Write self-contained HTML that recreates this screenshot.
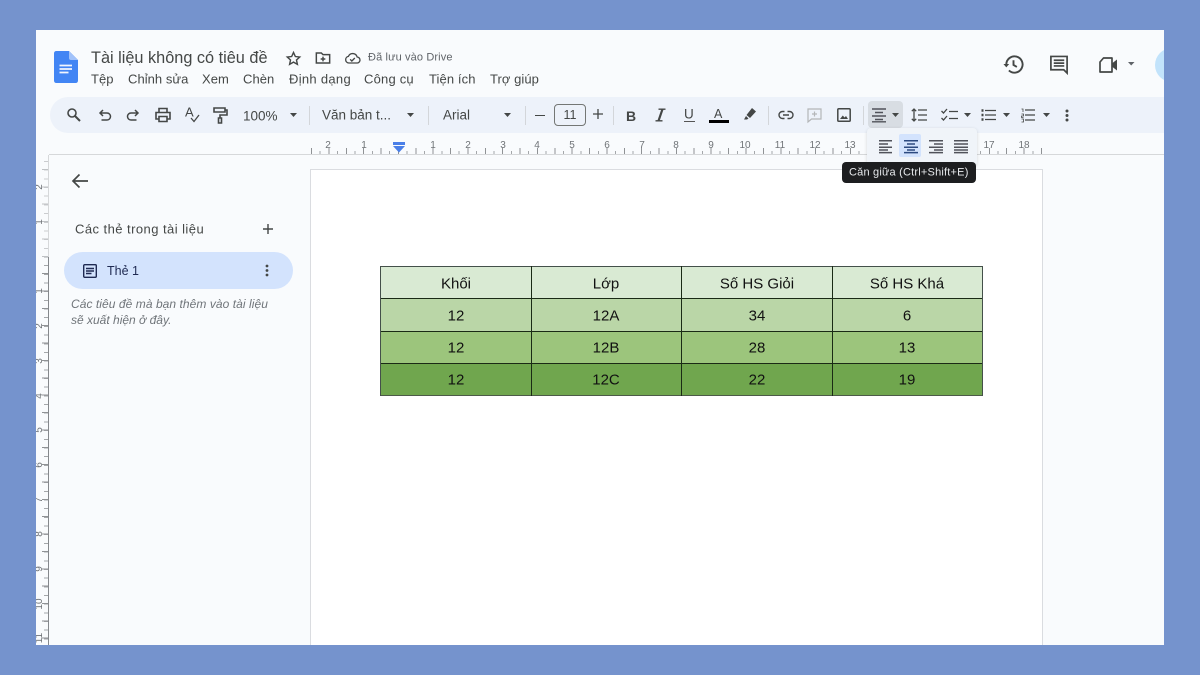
<!DOCTYPE html>
<html><head><meta charset="utf-8">
<style>
html,body{margin:0;padding:0;width:1200px;height:675px;overflow:hidden;background:#7593cd;font-family:"Liberation Sans","Noto Sans CJK SC",sans-serif}
#f{position:absolute;left:36px;top:30px;width:1128px;height:615px;background:#f9fbfd;overflow:hidden}
#w{position:absolute;left:-36px;top:-30px;width:1200px;height:675px;filter:blur(.3px)}
.a,.t{position:absolute}
.t{white-space:nowrap;line-height:1;transform:translateY(-50%)}
.m{font-size:13px;color:#444746;top:79px;letter-spacing:.05px}
.r{font-size:10px;color:#6f7377;transform:translate(-50%,-50%)}
.v{font-size:10px;color:#6f7377;transform:translate(-50%,-50%) rotate(-90deg)}
svg{position:absolute;overflow:visible}
.c{width:150px;text-align:center;color:#111;font-size:15px;transform:translateY(-50%)}
.s{top:106px;width:1px;height:19px;background:#d3d6da}
</style></head><body>
<div id="f"><div id="w">

<!-- doc icon -->
<svg style="left:54px;top:51px" width="24" height="32" viewBox="0 0 24 32"><path d="M2.500 0H15L24 9V29.500Q24 32 21.500 32H2.500Q0 32 0 29.500V2.500Q0 0 2.500 0Z" fill="#4285f4"/><path d="M15 0L24 9H17Q15 9 15 7Z" fill="#a1c2fa"/><path d="M5.500 14.500H18M5.500 18H18M5.500 21.500H14.500" stroke="#f1f5fe" stroke-width="1.800"/></svg>

<div class="t" style="left:91px;top:57.500px;font-size:16.300px;color:#444746">Tài liệu không có tiêu đề</div>
<svg style="left:285px;top:50px" width="17" height="17" viewBox="0 0 24 24" fill="none" stroke="#444746" stroke-width="2"><path d="M12 3.500l2.600 5.700 6.200.700-4.600 4.200 1.300 6.100L12 17.100l-5.500 3.100 1.300-6.100-4.600-4.200 6.200-.7z"/></svg>
<svg style="left:315px;top:50px" width="16" height="16" viewBox="0 0 24 24" fill="none" stroke="#444746" stroke-width="2.200"><path d="M2 19.500V4.500H9.500L12 7H22V19.500ZM12 10V17M8.500 13.500H15.500"/></svg>
<svg style="left:344px;top:50px" width="17" height="16" viewBox="0 0 24 24" fill="none" stroke="#444746" stroke-width="2"><path d="M6.500 19.500a5 5 0 0 1-.7-9.900A7 7 0 0 1 19 10.500a4.500 4.500 0 0 1-.5 9zM8.500 14l2.500 2.500 4.500-4.500"/></svg>
<div class="t" style="left:368px;top:58px;font-size:11px;letter-spacing:.13px;color:#5f6368">Đã lưu vào Drive</div>

<div class="t m" style="left:91px">Tệp</div>
<div class="t m" style="left:128px">Chỉnh sửa</div>
<div class="t m" style="left:202px">Xem</div>
<div class="t m" style="left:243px">Chèn</div>
<div class="t m" style="left:289px;letter-spacing:.3px">Định dạng</div>
<div class="t m" style="left:364px;letter-spacing:.2px">Công cụ</div>
<div class="t m" style="left:429px;letter-spacing:.1px">Tiện ích</div>
<div class="t m" style="left:490px">Trợ giúp</div>

<!-- top right -->
<svg style="left:1002px;top:53px" width="23" height="23" viewBox="0 0 24 24" fill="none" stroke="#444746" stroke-width="2"><path d="M4.500 12a8.500 8.500 0 1 1 2.700 6.200M12 7.500V12.500L15.500 14.500"/><path d="M1.500 11.500H7.500L4.500 15Z" fill="#444746" stroke="none"/></svg>
<svg style="left:1049px;top:55px" width="20" height="20" viewBox="0 0 21 21" fill="none" stroke="#444746" stroke-width="1.800"><path d="M2 1.500H19V19L15.500 15.500H2ZM5 5.500H16M5 8.500H16M5 11.500H16"/></svg>
<svg style="left:1098px;top:56px" width="20" height="18" viewBox="0 0 20 18" fill="none"><path d="M5.500 2H14V16H2V6Z" stroke="#444746" stroke-width="1.700" stroke-linejoin="round"/><path d="M14.500 7L19 3.500V14.500L14.500 11Z" fill="#444746"/></svg>
<svg style="left:1128px;top:62px" width="6" height="4"><path d="M0 0H6.500L3.200 3.500Z" fill="#5f6368"/></svg>
<div class="a" style="left:1155px;top:48px;width:34px;height:34px;border-radius:50%;background:#c2e3fb"></div>

<!-- toolbar -->
<div class="a" style="left:50px;top:97px;width:1130px;height:36px;border-radius:18px 0 0 18px;background:#edf2fa"></div>
<svg style="left:66px;top:107px" width="16" height="16" viewBox="0 0 16 16" fill="none" stroke="#444746" stroke-width="1.600"><circle cx="6" cy="6" r="4"/><path d="M9 9L14 14" stroke-width="2"/></svg>
<svg style="left:98px;top:108px" width="14" height="14" viewBox="0 0 14 14" fill="none" stroke="#444746" stroke-width="1.500"><path d="M3 5H9a3 3 0 0 1 0 7H3.500M5 2L2 5 5 8"/></svg>
<svg style="left:126px;top:108px" width="14" height="14" viewBox="0 0 14 14" fill="none" stroke="#444746" stroke-width="1.500"><path d="M11 5H5a3 3 0 0 0 0 7H10.500M9 2l3 3-3 3"/></svg>
<svg style="left:155px;top:107px" width="16" height="16" viewBox="0 0 16 16" fill="none" stroke="#444746" stroke-width="1.600"><path d="M4 5V1.500H12V5M4 12H1V5.500H15V12H12M4 9.500H12V14.500H4Z"/></svg>
<div class="t" style="left:185px;top:112px;font-size:13px;color:#444746">A</div>
<svg style="left:190px;top:114px" width="10" height="9" fill="none" stroke="#444746" stroke-width="1.300"><path d="M1 4L4 7.500 9 1"/></svg>
<svg style="left:213px;top:107px" width="15" height="17" viewBox="0 0 15 17" fill="none" stroke="#444746" stroke-width="1.600"><path d="M1 1H12V5H1ZM12 3H14V8H7V11M5.500 11H8.500V16H5.500Z"/></svg>
<div class="t" style="left:243px;top:116px;font-size:13.500px;color:#444746">100%</div>
<svg style="left:290px;top:113px" width="7" height="4"><path d="M0 0H7L3.500 4Z" fill="#444746"/></svg>
<div class="a s" style="left:309px"></div>
<div class="t" style="left:322px;top:115px;font-size:13.500px;color:#444746">Văn bản t...</div>
<svg style="left:407px;top:113px" width="7" height="4"><path d="M0 0H7L3.500 4Z" fill="#444746"/></svg>
<div class="a s" style="left:428px"></div>
<div class="t" style="left:443px;top:115px;font-size:13.500px;color:#444746">Arial</div>
<svg style="left:504px;top:113px" width="7" height="4"><path d="M0 0H7L3.500 4Z" fill="#444746"/></svg>
<div class="a s" style="left:525px"></div>
<div class="a" style="left:535px;top:114.500px;width:10px;height:1.200px;background:#444746"></div>
<div class="a" style="left:554px;top:104px;width:30px;height:20px;border:1px solid #747775;border-radius:4px"></div>
<div class="t" style="left:554px;width:32px;text-align:center;top:115px;font-size:12.500px;color:#444746">11</div>
<svg style="left:593px;top:109px" width="10" height="10"><path d="M5 0V10M0 5H10" stroke="#444746" stroke-width="1.300"/></svg>
<div class="a s" style="left:613px"></div>
<div class="t" style="left:626px;top:115.500px;font-size:14px;font-weight:bold;color:#444746">B</div>
<svg style="left:655px;top:108px" width="11" height="14" fill="none" stroke="#444746"><path d="M3.500 1.200H10.500M0.500 12.800H7.500" stroke-width="1.400"/><path d="M7.500 1.200L3.500 12.800" stroke-width="2.200"/></svg>
<div class="t" style="left:684px;top:113.500px;font-size:13.500px;color:#444746">U</div>
<div class="a" style="left:684px;top:121px;width:11px;height:1.200px;background:#555"></div>
<div class="t" style="left:714px;top:113.500px;font-size:12.500px;color:#444746">A</div>
<div class="a" style="left:709px;top:120px;width:20px;height:3px;background:#000"></div>
<svg style="left:743px;top:107px" width="14" height="14" viewBox="0 0 14 14"><path d="M9 1L13 4.500 7 11 3.500 8ZM3 9L5.500 11.500 4 12.500H1Z" fill="#444746"/></svg>
<div class="a s" style="left:768px"></div>
<svg style="left:778px;top:110px" width="16" height="10" viewBox="0 0 16 10" fill="none" stroke="#444746" stroke-width="1.400"><path d="M6.500 1.500H4.500a3.300 3.300 0 0 0 0 7H6.500M9.500 1.500H11.500a3.300 3.300 0 0 1 0 7H9.500M5 5H11"/></svg>
<svg style="left:807px;top:108px" width="15" height="15" viewBox="0 0 15 15" fill="none" stroke="#b4b6b8" stroke-width="1.200"><path d="M1 1H14V11H4.500L1 14ZM7.500 3.500V8.500M5 6H10"/></svg>
<svg style="left:837px;top:108px" width="14" height="14" viewBox="0 0 14 14"><rect x=".8" y=".8" width="12.400" height="12.400" rx="1" fill="none" stroke="#444746" stroke-width="1.500"/><path d="M3 11L5.800 7.500 7.500 9.500 9 8 11 11Z" fill="#444746"/></svg>
<div class="a s" style="left:863px"></div>
<div class="a" style="left:868px;top:101px;width:35px;height:27px;border-radius:4px;background:#d8dde3"></div>
<svg style="left:872px;top:108px" width="14" height="14" stroke="#50525a" stroke-width="1.400"><path d="M0 1H14M3 4.500H11M0 8H14M3 11.500H11M0 13.800H14"/></svg>
<svg style="left:892px;top:113px" width="7" height="4"><path d="M0 0H7L3.500 4Z" fill="#444746"/></svg>
<svg style="left:911px;top:108px" width="16" height="14" fill="none" stroke="#444746" stroke-width="1.300"><path d="M3 1V13M0.800 3.200L3 1 5.200 3.200M0.800 10.800L3 13 5.200 10.800M7 2H16M7 7H16M7 12H16"/></svg>
<svg style="left:941px;top:108px" width="17" height="14" fill="none" stroke="#444746" stroke-width="1.300"><path d="M0.500 3L2.500 5 6 1M0.500 10L2.500 12 6 8M8 3.500H17M8 10.500H17"/></svg>
<svg style="left:964px;top:113px" width="7" height="4"><path d="M0 0H7L3.500 4Z" fill="#444746"/></svg>
<svg style="left:981px;top:109px" width="15" height="12" fill="none" stroke="#444746" stroke-width="1.300"><path d="M4 1.500H15M4 6H15M4 10.500H15"/><path d="M.5 1.500H2.500M.5 6H2.500M.5 10.500H2.500" stroke-width="2.400"/></svg>
<svg style="left:1003px;top:113px" width="7" height="4"><path d="M0 0H7L3.500 4Z" fill="#444746"/></svg>
<svg style="left:1021px;top:108px" width="14" height="14" fill="none" stroke="#444746" stroke-width="1.300"><path d="M4 2H14M4 7H14M4 12H14"/><path d="M.5 1H2V4M.5 6H2.500V8H.5V9.500H2.500M.5 11H2.500V14H.5" stroke-width=".8"/></svg>
<svg style="left:1043px;top:113px" width="7" height="4"><path d="M0 0H7L3.500 4Z" fill="#444746"/></svg>
<svg style="left:1065px;top:109px" width="4" height="13"><circle cx="2" cy="2" r="1.500" fill="#444746"/><circle cx="2" cy="6.500" r="1.500" fill="#444746"/><circle cx="2" cy="11" r="1.500" fill="#444746"/></svg>

<!-- horizontal ruler -->
<div class="a" style="left:49px;top:154px;width:1115px;height:1px;background:#d6d8da"></div>
<div class="a" style="left:311px;top:151px;width:731px;height:3px;background:repeating-linear-gradient(90deg,#a4a7aa 0 1px,transparent 1px 8.690px)"></div>
<div class="a" style="left:311px;top:148px;width:732px;height:6px;background:repeating-linear-gradient(90deg,#8f9295 0 1px,transparent 1px 17.380px)"></div>
<div class="t r" style="left:328px;top:146px">2</div>
<div class="t r" style="left:364px;top:146px">1</div>
<div class="t r" style="left:433px;top:146px">1</div>
<div class="t r" style="left:468px;top:146px">2</div>
<div class="t r" style="left:503px;top:146px">3</div>
<div class="t r" style="left:537px;top:146px">4</div>
<div class="t r" style="left:572px;top:146px">5</div>
<div class="t r" style="left:607px;top:146px">6</div>
<div class="t r" style="left:642px;top:146px">7</div>
<div class="t r" style="left:676px;top:146px">8</div>
<div class="t r" style="left:711px;top:146px">9</div>
<div class="t r" style="left:745px;top:146px">10</div>
<div class="t r" style="left:780px;top:146px">11</div>
<div class="t r" style="left:815px;top:146px">12</div>
<div class="t r" style="left:850px;top:146px">13</div>
<div class="t r" style="left:989px;top:146px">17</div>
<div class="t r" style="left:1024px;top:146px">18</div>
<div class="a" style="left:393px;top:142px;width:12px;height:3px;background:#4a7fe8"></div>
<svg style="left:393px;top:146px" width="12" height="7"><path d="M0 0H12L6 6.500Z" fill="#4a7fe8"/></svg>

<!-- vertical ruler -->
<div class="a" style="left:48px;top:155px;width:1px;height:490px;background:#d6d8da"></div>
<div class="a" style="left:48px;top:257px;width:1px;height:388px;background:#85888c"></div>
<div class="a" style="left:44px;top:161px;width:4px;height:484px;background:repeating-linear-gradient(180deg,#a4a7aa 0 1px,transparent 1px 8.680px)"></div>
<div class="a" style="left:42px;top:169px;width:6px;height:476px;background:repeating-linear-gradient(180deg,#8f9295 0 1px,transparent 1px 17.360px)"></div>
<div class="a" style="left:36px;top:155px;width:12px;height:102px;background:rgba(249,251,253,.45)"></div>
<div class="t v" style="left:40px;top:187px">2</div>
<div class="t v" style="left:40px;top:222px">1</div>
<div class="t v" style="left:40px;top:291px">1</div>
<div class="t v" style="left:40px;top:326px">2</div>
<div class="t v" style="left:40px;top:361px">3</div>
<div class="t v" style="left:40px;top:396px">4</div>
<div class="t v" style="left:40px;top:430px">5</div>
<div class="t v" style="left:40px;top:465px">6</div>
<div class="t v" style="left:40px;top:500px">7</div>
<div class="t v" style="left:40px;top:534px">8</div>
<div class="t v" style="left:40px;top:569px">9</div>
<div class="t v" style="left:40px;top:604px">10</div>
<div class="t v" style="left:40px;top:638px">11</div>

<!-- sidebar -->
<svg style="left:71px;top:173px" width="18" height="16" viewBox="0 0 18 16" fill="none" stroke="#444746" stroke-width="1.700"><path d="M17 8H2M8.500 1.500L2 8 8.500 14.500"/></svg>
<div class="t" style="left:75px;top:229px;font-size:13px;letter-spacing:.45px;color:#444746">Các thẻ trong tài liệu</div>
<svg style="left:263px;top:224px" width="10" height="10"><path d="M5 0V10M0 5H10" stroke="#444746" stroke-width="1.400"/></svg>
<div class="a" style="left:64px;top:252px;width:229px;height:37px;border-radius:19px;background:#d3e3fd"></div>
<svg style="left:83px;top:264px" width="14" height="14" fill="none" stroke="#1f2a52" stroke-width="1.400"><rect x=".7" y=".7" width="12.600" height="12.600" rx="1"/><path d="M3 4.500H11M3 7H11M3 9.500H8.500"/></svg>
<div class="t" style="left:107px;top:271px;font-size:12.500px;color:#1f2a52">Thẻ 1</div>
<svg style="left:265px;top:264px" width="4" height="13"><circle cx="2" cy="2" r="1.400" fill="#444746"/><circle cx="2" cy="6.500" r="1.400" fill="#444746"/><circle cx="2" cy="11" r="1.400" fill="#444746"/></svg>
<div class="t" style="left:71px;top:304px;font-size:12px;letter-spacing:.06px;font-style:italic;color:#70757a">Các tiêu đề mà bạn thêm vào tài liệu</div>
<div class="t" style="left:71px;top:320px;font-size:12px;font-style:italic;color:#70757a">sẽ xuất hiện ở đây.</div>

<!-- page -->
<div class="a" style="left:310px;top:169px;width:731px;height:480px;background:#fff;border:1px solid #dadce0;border-bottom:0"></div>

<!-- table -->
<div class="a" style="left:381px;top:267px;width:601px;height:32px;background:#d9ead3"></div>
<div class="a" style="left:381px;top:299px;width:601px;height:32px;background:#bad6a7"></div>
<div class="a" style="left:381px;top:331px;width:601px;height:32px;background:#9cc57c"></div>
<div class="a" style="left:381px;top:363px;width:601px;height:33px;background:#70a64e"></div>
<div class="a" style="left:380px;top:266px;width:603px;height:1px;background:#44504a"></div>
<div class="a" style="left:380px;top:298px;width:603px;height:1px;background:#1a2a15"></div>
<div class="a" style="left:380px;top:331px;width:603px;height:1px;background:#1a2a15"></div>
<div class="a" style="left:380px;top:363px;width:603px;height:1px;background:#1a2a15"></div>
<div class="a" style="left:380px;top:395px;width:603px;height:1px;background:#4c5a48"></div>
<div class="a" style="left:380px;top:266px;width:1px;height:130px;background:#44504a"></div>
<div class="a" style="left:531px;top:266px;width:1px;height:130px;background:#1a2a15"></div>
<div class="a" style="left:681px;top:266px;width:1px;height:130px;background:#1a2a15"></div>
<div class="a" style="left:832px;top:266px;width:1px;height:130px;background:#1a2a15"></div>
<div class="a" style="left:982px;top:266px;width:1px;height:130px;background:#44504a"></div>

<div class="t c" style="left:381px;top:284px">Khối</div><div class="t c" style="left:531px;top:284px">Lớp</div><div class="t c" style="left:682px;top:284px">Số HS Giỏi</div><div class="t c" style="left:832px;top:284px">Số HS Khá</div>
<div class="t c" style="left:381px;top:316px">12</div><div class="t c" style="left:531px;top:316px">12A</div><div class="t c" style="left:682px;top:316px">34</div><div class="t c" style="left:832px;top:316px">6</div>
<div class="t c" style="left:381px;top:348px">12</div><div class="t c" style="left:531px;top:348px">12B</div><div class="t c" style="left:682px;top:348px">28</div><div class="t c" style="left:832px;top:348px">13</div>
<div class="t c" style="left:381px;top:380px">12</div><div class="t c" style="left:531px;top:380px">12C</div><div class="t c" style="left:682px;top:380px">22</div><div class="t c" style="left:832px;top:380px">19</div>

<!-- align popup -->
<div class="a" style="left:867px;top:128px;width:110px;height:38px;background:#f0f4f9;border-radius:4px;box-shadow:0 1px 3px rgba(60,64,67,.2)"></div>
<div class="a" style="left:899px;top:134px;width:22px;height:23px;background:#d3e3fd;border-radius:2px"></div>
<svg style="left:879px;top:140px" width="13" height="13" stroke="#50525a" stroke-width="1.500"><path d="M0 .8H13M0 4H9M0 7.200H13M0 10H9M0 12.600H13"/></svg>
<svg style="left:904px;top:140px" width="14" height="13" stroke="#2c4a80" stroke-width="1.500"><path d="M0 .8H14M3 4H11M0 7.200H14M3 10H11M0 12.600H14"/></svg>
<svg style="left:929px;top:140px" width="14" height="13" stroke="#50525a" stroke-width="1.500"><path d="M0 .8H14M5 4H14M0 7.200H14M5 10H14M0 12.600H14"/></svg>
<svg style="left:954px;top:140px" width="14" height="13" stroke="#50525a" stroke-width="1.500"><path d="M0 .8H14M0 4H14M0 7.200H14M0 10H14M0 12.600H14"/></svg>
<div class="a" style="left:842px;top:162px;width:134px;height:21px;background:#1d1e20;border-radius:4px"></div>
<div class="t" style="left:849px;top:173px;font-size:11px;letter-spacing:.2px;color:#e8eaed">Căn giữa (Ctrl+Shift+E)</div>

</div></div>
</body></html>
